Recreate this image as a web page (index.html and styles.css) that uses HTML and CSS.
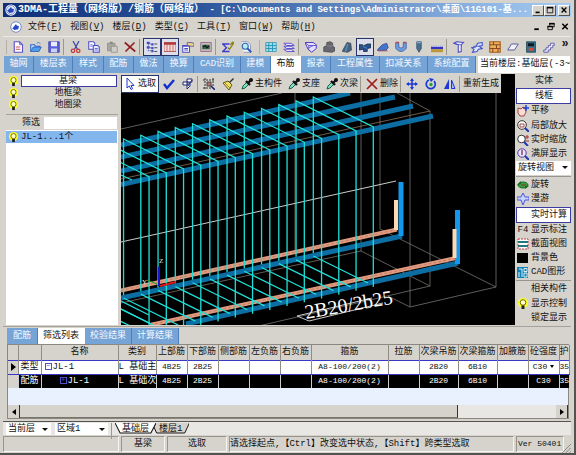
FILE: index.html
```html
<!DOCTYPE html>
<html lang="zh-CN">
<head>
<meta charset="utf-8">
<title>3DMA</title>
<link rel="stylesheet" href="styles.css">
</head>
<body>
<div class="window">
  <header class="titlebar">
    <svg class="logo" viewBox="0 0 16 16"><circle cx="8" cy="8" r="7.5" fill="#fff"/><circle cx="8" cy="8" r="6" fill="#dfe8fb" stroke="#5a78c8"/><path d="M3 9l5-5 1 2 3 1-1 4-5 1z" fill="#2947b8"/></svg>
    <h1 class="title"><span class="app">3DMA-工程量（网络版）/钢筋（网络版）</span> - [C:\Documents and Settings\Administrator\桌面\11G101-基...</h1>
    <div class="winbtns">
      <button aria-label="最小化"><svg viewBox="0 0 10 10"><path d="M2 8h5" stroke="#000" stroke-width="2"/></svg></button>
      <button aria-label="最大化"><svg viewBox="0 0 10 10"><path d="M1.500 2v6.500h7V2z" stroke="#000" fill="none"/><path d="M1 2h8" stroke="#000" stroke-width="2"/></svg></button>
      <button class="close" aria-label="关闭"><svg viewBox="0 0 10 10"><path d="M2 2l6 6M8 2L2 8" stroke="#000" stroke-width="1.700"/></svg></button>
    </div>
  </header>

  <nav class="menubar">
    <svg class="logo" viewBox="0 0 16 16"><circle cx="8" cy="8" r="7" fill="#fff" stroke="#4e6cc0"/><path d="M3 10l5-6 1 2 3 1-1 4-5 1z" fill="#2947c8"/></svg>
    <button>文件(<u>F</u>)</button><button>视图(<u>V</u>)</button><button>楼层(<u>D</u>)</button><button>类型(<u>C</u>)</button><button>工具(<u>T</u>)</button><button>窗口(<u>W</u>)</button><button>帮助(<u>H</u>)</button>
    <div class="docbtns">
      <button aria-label="最小化文档"><svg viewBox="0 0 10 10"><path d="M2 8h5" stroke="#000" stroke-width="2"/></svg></button>
      <button aria-label="还原文档"><svg viewBox="0 0 10 10"><path d="M3.500 4V1.500h5v4H7M1.500 5v3.500h5V5z" stroke="#000" fill="none"/><path d="M3 2h6M1 5h6" stroke="#000" stroke-width="1.600"/></svg></button>
      <button aria-label="关闭文档"><svg viewBox="0 0 10 10"><path d="M2 2l6 6M8 2L2 8" stroke="#000" stroke-width="1.700"/></svg></button>
    </div>
  </nav>

  <div class="toolbar">
    <i class="handle"></i>
    <button aria-label="新建"><svg viewBox="0 0 16 16"><path d="M3 1h7l4 4v10H3z" fill="#fff" stroke="#5a50c8" stroke-width="1.500"/><path d="M10 1v4h4" fill="none" stroke="#5a50c8"/><path d="M5 8h6M5 11h6" stroke="#d05050" stroke-width="1.500"/></svg></button>
    <button aria-label="打开"><svg viewBox="0 0 16 16"><path d="M1 14V5h5l1 2h6v2" fill="#cfe4ff" stroke="#2c66c8" stroke-width="1.500"/><path d="M1 14l3-6h11l-3 6z" fill="#4f9fe8" stroke="#2456b8"/><path d="M9 3q3-3 5 1" fill="none" stroke="#2c66c8"/></svg></button>
    <button aria-label="保存"><svg viewBox="0 0 16 16"><path d="M1 1h14v14H1z" fill="#5c62d8" stroke="#3434a8"/><path d="M4 1h8v6H4z" fill="#e8eeff"/><path d="M4 10h8v5H4z" fill="#cdd2f4"/></svg></button>
    <i class="sep"></i>
    <button aria-label="剪切"><svg viewBox="0 0 16 16"><path d="M4 0l6 11M12 0L6 11" stroke="#3344a8" stroke-width="1.600"/><circle cx="4" cy="13" r="2.300" fill="none" stroke="#c03838" stroke-width="1.600"/><circle cx="11" cy="13" r="2.300" fill="none" stroke="#c03838" stroke-width="1.600"/></svg></button>
    <button aria-label="复制"><svg viewBox="0 0 16 16"><path d="M1 1h6l2 2v8H1z" fill="#fff" stroke="#4848c8" stroke-width="1.400"/><path d="M7 6h6l2 2v7H7z" fill="#e5e9ff" stroke="#4848c8" stroke-width="1.400"/><path d="M9 10h4M9 12h4M3 5h3M3 7h3" stroke="#4848c8"/></svg></button>
    <button aria-label="粘贴" disabled><svg viewBox="0 0 16 16"><path d="M2 3h10v10H2z" fill="#a8a6a0" stroke="#8b8984"/><path d="M5 1h4v3H5z" fill="#8b8984"/><path d="M7 7h8v8H7z" fill="#d0cec8" stroke="#8b8984"/></svg></button>
    <button aria-label="删除"><svg viewBox="0 0 16 16"><path d="M1 2l14 12M14 2L2 14" stroke="#922020" stroke-width="2.200"/></svg></button>
    <i class="sep"></i>
    <button class="on" aria-label="树"><svg viewBox="0 0 16 16"><path d="M3 2v11M3 4h4M3 9h4M3 13h4" stroke="#333a90" stroke-dasharray="1.500 1"/><path d="M1 1h4v3H1zM1 7h4v3H1zM7 3h3v3H7zM7 8h3v3H7zM7 12h3v3H7z" fill="#4a4ac0"/><path d="M11 4h4M11 9h4M11 14h4" stroke="#222"/></svg></button>
    <button class="on" aria-label="表格"><svg viewBox="0 0 16 16"><path d="M0 2h16v12H0z" fill="#f7dada" stroke="#a83a3a"/><path d="M0 2h16v3H0z" fill="#b03838"/><path d="M4 4v10M8 4v10M12 4v10" stroke="#b85252"/></svg></button>
    <button aria-label="属性"><svg viewBox="0 0 16 16"><path d="M1 6h9v9H1z" fill="#fff" stroke="#4848c8" stroke-width="1.400"/><path d="M1 7h9M3 10h5M3 12h5" stroke="#4848c8" stroke-width="1.300"/><path d="M7 2h5l4 1v4h-4l-5-1z" fill="#ead08c" stroke="#514a8c"/></svg></button>
    <button aria-label="图像"><svg viewBox="0 0 16 16"><path d="M1 2h14v12H1z" fill="#cfb7c1" stroke="#815a79"/><path d="M3 5h10v6H3z" fill="#2d6d48"/><path d="M4 8l3-2 2 3 3-2" stroke="#111" fill="none" stroke-width="1.400"/></svg></button>
    <i class="sep"></i>
    <button aria-label="汇总"><svg viewBox="0 0 16 16"><path d="M10 4H1l5 5-5 5h9" fill="none" stroke="#3b3bd0" stroke-width="1.800"/><path d="M8 9l2 2 6-9M11 5l4-4" fill="none" stroke="#8a7c18" stroke-width="1.800"/></svg></button>
    <button aria-label="预览"><svg viewBox="0 0 16 16"><path d="M2 1h8l4 4v10H5" fill="#f4f6ff" stroke="#7a86b0"/><circle cx="7" cy="7" r="4" fill="#b8ecf4" stroke="#356aa8" stroke-width="1.500"/><path d="M10 10l5 5" stroke="#2d52b8" stroke-width="2.400"/></svg></button>
    <i class="handle mid"></i>
    <button aria-label="轴网"><svg viewBox="0 0 16 16"><path d="M1 2h14v12H1z" fill="#9fdce8" stroke="#2c96b8"/><path d="M5 2v12M10 2v12M1 6h14M1 10h14" stroke="#2c96b8" stroke-width="1.300"/></svg></button>
    <button aria-label="楼层"><svg viewBox="0 0 16 16"><path d="M1 3h10l4 3H5zM1 7h10l4 3H5zM1 11h10l4 3H5z" fill="#e4e4ff" stroke="#5a48c8" stroke-width="1.200"/></svg></button>
    <i class="sep"></i>
    <button aria-label="基础"><svg viewBox="0 0 16 16"><path d="M0 2h11l4 3v5l-6 5-5-4z" fill="#e0e0ff" stroke="#5438c0" stroke-width="1.300"/><path d="M0 2l5 4h10M5 6v5M5 9l6-3" fill="none" stroke="#5438c0"/></svg></button>
    <button aria-label="柱"><svg viewBox="0 0 16 16"><path d="M1 14V8l4-2V2l5-1 3 2v4l3 2v4l-4 2z" fill="#686770" stroke="#45444c"/><path d="M5 6l4 1 4-1" stroke="#8b8b94" fill="none"/></svg></button>
    <button aria-label="墙"><svg viewBox="0 0 16 16"><path d="M2 13L8 2l5 1 1 9-5 3-7-1z" fill="#4b6078" stroke="#35485c"/><path d="M9 4l-3 10" stroke="#45a0d8" stroke-width="1.500"/></svg></button>
    <button class="on" aria-label="梁"><svg viewBox="0 0 16 16"><path d="M0 5h5v2l6-3h5v5l-5 1v4H6v-3L0 12z" fill="#28528c" stroke="#17273f"/><path d="M5 7l6 3" stroke="#5c9ad8"/></svg></button>
    <button aria-label="板"><svg viewBox="0 0 16 16"><path d="M1 11l6-6 6-2 2 6-3 3-11 1z" fill="#3b78cc" stroke="#4b3b90"/><path d="M2 13h12" stroke="#96506c" stroke-width="1.500"/></svg></button>
    <button aria-label="槽"><svg viewBox="0 0 16 16"><path d="M1 2h4v6q3 3 6 0V2h4v8q-7 8-14 0z" fill="#6aa0e0" stroke="#38509c"/><path d="M1 2h4M11 2h4" stroke="#b84848" stroke-width="2"/></svg></button>
    <button aria-label="桩"><svg viewBox="0 0 16 16"><path d="M5 1h6v9l-3 5-3-5z" fill="#466f94" stroke="#34495e"/><path d="M5 2h6" stroke="#80a8c8" stroke-width="2"/></svg></button>
    <button aria-label="装饰"><svg viewBox="0 0 16 16"><path d="M0 8h16v3H0z" fill="#3434c0"/><path d="M0 7h16" stroke="#7676e8" stroke-dasharray="2 1"/><path d="M0 11h16v4H0z" fill="#b89838"/></svg></button>
    <i class="sep"></i>
    <button aria-label="构造柱"><svg viewBox="0 0 16 16"><path d="M1 3l4-2 9 1-3 3v9l-4 1V5z" fill="#eef0ff" stroke="#4a4ac8" stroke-width="1.400"/><path d="M1 3l6 2h4" fill="none" stroke="#4a4ac8"/></svg></button>
    <button aria-label="异形"><svg viewBox="0 0 16 16"><path d="M1 9l5-1 3-5 6-1v4l-4 1 4 3-5 1-2 3-6 1 2-4z" fill="#dbe6ff" stroke="#3d51c4" stroke-width="1.400"/><path d="M3 7h9" stroke="#3d51c4"/></svg></button>
    <button aria-label="砌体"><svg viewBox="0 0 16 16"><path d="M1 1h14v14H1z" fill="#e8b060" stroke="#a85c1c" stroke-width="1.400"/><path d="M1 5h14M1 10h14M6 1v4M10 5v5M5 10v5M12 10v5" stroke="#8c4a1c" stroke-width="1.400"/></svg></button>
    <button aria-label="面"><svg viewBox="0 0 16 16"><path d="M1 12l5-8h9l-5 8z" fill="#f2f2f8" stroke="#58589c" stroke-width="1.300"/></svg></button>
    <button aria-label="门窗"><svg viewBox="0 0 16 16"><path d="M2 1h12v14H2z" fill="#30718c" stroke="#20404c"/><path d="M4 3h8v4H4z" fill="#101820"/><path d="M5 9h6v4H5z" fill="#d84838"/></svg></button>
    <button aria-label="楼梯"><svg viewBox="0 0 16 16"><path d="M1 15v-3h3V9h3V6h3V3h5v3h-2v3h-3v3H7v3z" fill="#e9e9fb" stroke="#6a62ac" stroke-width="1.300"/></svg></button>
    <button class="more" aria-label="更多">»</button>
  </div>

  <div class="tabrow">
    <div class="tabs" role="tablist">
      <button role="tab">轴网</button><button role="tab">楼层表</button><button role="tab">样式</button><button role="tab">配筋</button><button role="tab">做法</button><button role="tab">换算</button><button role="tab">CAD识别</button><button role="tab">建模</button><button role="tab" class="sel" aria-selected="true">布筋</button><button role="tab">报表</button><button role="tab">工程属性</button><button role="tab">扣减关系</button><button role="tab">系统配置</button>
    </div>
    <div class="floor">当前楼层:基础层(-3~</div>
  </div>

  <main class="work">
    <aside class="left">
      <div class="kinds">
        <div class="kind"><svg class="bulb" viewBox="0 0 12 12"><use href="#bulb"/></svg><button class="sel">基梁</button></div>
        <div class="kind"><svg class="bulb" viewBox="0 0 12 12"><use href="#bulb"/></svg><button>地框梁</button></div>
        <div class="kind"><svg class="bulb" viewBox="0 0 12 12"><use href="#bulb"/></svg><button>地圈梁</button></div>
      </div>
      <div class="filter"><label for="flt">筛选</label><input id="flt" type="text"></div>
      <ul class="members">
        <li><svg class="bulb" viewBox="0 0 12 12"><g id="bulb"><circle cx="6" cy="5" r="5" fill="#ffff20"/><circle cx="6" cy="4.500" r="2.800" fill="#ffffc8" stroke="#6a6a00"/><path d="M4.500 7.500h3v3.500h-3z" fill="#222"/></g></svg><span>JL-1...1个</span></li>
      </ul>
    </aside>

    <section class="view">
      <div class="viewbar">
        <button class="pick"><svg viewBox="0 0 12 12"><path d="M3 0v10l2.300-2 1.700 3.500 1.600-.8L7 7.500h3z" fill="#fff" stroke="#2238c8"/></svg>选取</button>
        <button class="ico" aria-label="确定"><svg viewBox="0 0 12 12"><path d="M1 6l3 4 7-8" fill="none" stroke="#1030d0" stroke-width="2.400"/></svg></button>
        <button class="ico" aria-label="过滤"><svg viewBox="0 0 12 12"><path d="M1 4h5v3H1zM5 1h5v3H5zM5 4v7l3-3V4" fill="#fff" stroke="#222a78"/><path d="M10 2l-4 6" stroke="#222a78"/></svg></button>
        <i class="sep"></i>
        <button class="ico" aria-label="框选"><svg viewBox="0 0 12 12"><path d="M2 0v12M0 2h12M10 0v8M0 10h8" stroke="#333" stroke-dasharray="2 1"/><path d="M4 4h4v4H4z" fill="#b87878" stroke="#444"/><path d="M8 8l4 4" stroke="#222a78" stroke-width="1.600"/></svg></button>
        <button class="ico" aria-label="格式刷"><svg viewBox="0 0 12 12"><path d="M7 4l4-4 1 1-4 4z" fill="#333"/><path d="M1 5l5-2 4 4-3 5z" fill="#f0e060" stroke="#615520"/><path d="M3 5l5 5" stroke="#a09030"/></svg></button>
        <button><svg viewBox="0 0 12 12"><use href="#dropper"/></svg>主构件</button>
        <button><svg viewBox="0 0 12 12"><g id="dropper"><path d="M1 11l1-3 4-4 2 2-4 4z" fill="#80e0c8" stroke="#186048"/><path d="M5 3l4 4M7 5l3-3" stroke="#111" stroke-width="2.400"/><circle cx="10" cy="2" r="2" fill="#111"/></g></svg>支座</button>
        <button><svg viewBox="0 0 12 12"><use href="#dropper"/></svg>次梁</button>
        <i class="sep"></i>
        <button><svg viewBox="0 0 12 12"><path d="M1 1l10 10M11 1L1 11" stroke="#a01c1c" stroke-width="1.700"/></svg>删除</button>
        <i class="sep"></i>
        <button class="ico" aria-label="移动"><svg viewBox="0 0 12 12"><path d="M6 1v10M1 6h10" stroke="#1838d8" stroke-width="1.500"/><path d="M6 0l2 3H4zM6 12l2-3H4zM0 6l3-2v4zM12 6L9 4v4z" fill="#1838d8"/></svg></button>
        <button class="ico" aria-label="旋转"><svg viewBox="0 0 12 12"><path d="M4 2a4.500 4.500 0 1 0 5 1" fill="none" stroke="#1838d8" stroke-width="1.700"/><path d="M4 0l5 1-3 3z" fill="#1838d8"/><circle cx="6" cy="6.500" r="1.700" fill="#28a038"/></svg></button>
        <button class="ico" aria-label="镜像"><svg viewBox="0 0 12 12"><path d="M5 1v10H0z" fill="#1838d8"/><path d="M7.500 2v8.500H11z" fill="#a8b8f8" stroke="#1838d8"/></svg></button>
        <i class="sep"></i>
        <button class="regen">重新生成</button>
      </div>
      <svg class="scene" viewBox="121 93 394 232" preserveAspectRatio="xMinYMin slice">
        <g fill="none" stroke="#77736f" stroke-width=".8">
          <path d="M121 129L282 93M397 93l33 18M430 111v175M361 93v158M380 93v136M410 93v214M496 93v194M295 93v157"/>
          <path d="M361 251l69 35M121 303L361 251M430 286L250 328M410 307l86-20M380 229l116 58M410 307l-22-11"/>
          <path d="M121 179L430 111" stroke="#8a725e"/>
        </g>
        <path d="M121 242L396 181" stroke="#e4e4e4" stroke-width=".9"/>
        <g fill="none" stroke="#0d6ea4" stroke-width="5">
          <path d="M121 145L350 93M121 157L395 97M121 171L413 106"/>
          <path d="M121 184.500L433 116"/>
          <path d="M121 298L402 236M186 324L458 263"/>
        </g>
        <g fill="none" stroke="#e39b80" stroke-width="4">
          <path d="M121 290.500L397 229.500M150 325L456 258"/>
        </g>
        <path d="M121 290.500L397 229.500M150 325L456 258" stroke="#a86a58" stroke-width=".6" stroke-dasharray="3 2"/>
        <g fill="none" stroke="#1298ec" stroke-width="5"><path d="M401 182v54M457.500 210v54"/></g>
        <g fill="none" stroke="#fbdab4" stroke-width="4"><path d="M396 200v30M454.500 229v29"/></g>
        <g fill="none" stroke="#1fe0d8" stroke-width="1.300">
          <path id="stirrup" d="M373.300 287V127L313.300 97v156M313.300 256L368 283"/>
          <use href="#stirrup" x="-17.250" y="3.820"/><use href="#stirrup" x="-34.500" y="7.640"/>
          <use href="#stirrup" x="-51.750" y="11.460"/><use href="#stirrup" x="-69" y="15.280"/>
          <use href="#stirrup" x="-86.250" y="19.100"/><use href="#stirrup" x="-103.500" y="22.920"/>
          <use href="#stirrup" x="-120.750" y="26.740"/><use href="#stirrup" x="-138" y="30.560"/>
          <use href="#stirrup" x="-155.250" y="34.380"/><use href="#stirrup" x="-172.500" y="38.200"/>
          <use href="#stirrup" x="-189.750" y="42.020"/><use href="#stirrup" x="-207" y="45.840"/>
          <use href="#stirrup" x="-224.250" y="49.660"/>
          <path d="M132 180l-11-5M121 162l-2-1M121 309l30 15M121 301l28 14"/>
        </g>
        <path d="M159 267v19" stroke="#1018d8" stroke-width="2"/>
        <path d="M160 286l16-4" stroke="#e01818" stroke-width="2"/>
        <path d="M147 280l10 4" stroke="#18a018"/>
        <text class="axis" x="159" y="263">Z</text><text class="axis" x="142" y="284">Y</text>
        <path d="M372 298L297 316l12 5 74-18" fill="none" stroke="#ddd" stroke-width=".9"/>
        <text class="mark" x="306" y="319" transform="rotate(-10 306 319)">2B20/2b25</text>
      </svg>
    </section>

    <aside class="side">
      <button>实体</button>
      <button class="sel">线框</button>
      <button><svg viewBox="0 0 12 12"><path d="M1 3l3 1 2-2 2 1 1 4-2 4H3L1 8z" fill="#fbdcd4" stroke="#a04848"/><path d="M9 0v6M6 3h6" stroke="#2040d8" stroke-width="1.500"/></svg>平移</button>
      <button><svg viewBox="0 0 12 12"><circle cx="5" cy="5" r="4.300" fill="#fff" stroke="#333"/><path d="M3 4h4v3H3z" fill="none" stroke="#a04848"/><path d="M8 8l4 4" stroke="#2038b8" stroke-width="2"/></svg>局部放大</button>
      <button><svg viewBox="0 0 12 12"><circle cx="4.500" cy="5" r="3.800" fill="#fff" stroke="#333"/><path d="M7 8l4 4" stroke="#2038b8" stroke-width="2"/><path d="M8 3h4M10 1v4M8 7h4" stroke="#a03030"/></svg>实时缩放</button>
      <button><svg viewBox="0 0 12 12"><circle cx="5" cy="5" r="4.200" fill="#e8e8ff" stroke="#5038a0"/><path d="M5 2v5" stroke="#a03878" stroke-width="1.500"/><path d="M8 8l4 4" stroke="#2038b8" stroke-width="2"/></svg>满屏显示</button>
      <div class="pickview drop"><select aria-label="视图"><option>旋转视图</option></select></div>
      <hr>
      <button><svg viewBox="0 0 12 12"><ellipse cx="6" cy="6" rx="5" ry="3" fill="#38a040" stroke="#186820"/><path d="M0 6l4-4v3M12 7L8 10V7" fill="#186820"/><path d="M4 6h5" stroke="#a02828"/></svg>旋转</button>
      <button><svg viewBox="0 0 12 12"><path d="M6 0l2 4h4v3H8l-2 5-2-5H0V4h4z" fill="#c8d4ff" stroke="#4858d8"/></svg>漫游</button>
      <button class="sel calc">实时计算</button>
      <button><b>F4</b>显示标注</button>
      <button><svg viewBox="0 0 12 12"><path d="M1 1h10v10H1z" fill="#fff" stroke="#c83848" stroke-dasharray="2 1"/><path d="M1 4h10M1 8h10" stroke="#287878" stroke-width="2"/></svg>截面视图</button>
      <button><svg viewBox="0 0 12 12"><path d="M0 1h11v10H0z"/></svg>背景色</button>
      <button><svg viewBox="0 0 12 12"><path d="M0 1h11v11H0z" fill="#1080b0"/><path d="M2 3h3M2 6v5M5 3v8M7 2.500h3v3H7zM7 7h3v4H7z" fill="none" stroke="#d8f4ff"/></svg>CAD图形</button>
      <hr>
      <button class="calc">相关构件</button>
      <button><svg viewBox="0 0 12 12"><use href="#bulb"/></svg>显示控制</button>
      <button class="calc">锁定显示</button>
    </aside>
  </main>

  <section class="bottom">
    <div class="tabs low" role="tablist">
      <button role="tab">配筋</button><button role="tab" class="sel" aria-selected="true">筛选列表</button><button role="tab">校验结果</button><button role="tab">计算结果</button>
    </div>
    <div class="gridbox">
      <table>
        <colgroup><col class="c10"><col class="c23"><col class="c77"><col class="c38"><col class="c31"><col class="c31"><col class="c31"><col class="c31"><col class="c31"><col class="c77"><col class="c31"><col class="c39"><col class="c39"><col class="c31"><col class="c31"><col class="c10"></colgroup>
        <thead><tr><th></th><th></th><th>名称</th><th>类别</th><th>上部筋</th><th>下部筋</th><th>侧部筋</th><th>左负筋</th><th>右负筋</th><th>箍筋</th><th>拉筋</th><th>次梁吊筋</th><th>次梁箍筋</th><th>加腋筋</th><th>砼强度</th><th>护</th></tr></thead>
        <tbody>
          <tr class="type"><td class="ind"><i></i></td><td class="cjk">类型</td><td class="name"><span class="exp">−</span>JL-1</td><td class="cjk cat">L 基础主</td><td>4B25</td><td>2B25</td><td></td><td></td><td></td><td>A8-100/200(2)</td><td></td><td>2B20</td><td>6B10</td><td></td><td class="grade">C30</td><td>35</td></tr>
          <tr class="cur"><td class="ind"></td><td class="cjk">配筋</td><td class="name sub"><span class="exp">+</span>JL-1</td><td class="cjk cat">L 基础次</td><td>4B25</td><td>2B25</td><td></td><td></td><td></td><td>A8-100/200(2)</td><td></td><td>2B20</td><td>6B10</td><td></td><td>C30</td><td>35</td></tr>
        </tbody>
      </table>
      <div class="void"></div>
      <div class="hscroll">
        <button class="arrow prev" aria-label="向左"></button><div class="thumb"></div><div class="track"></div><button class="arrow next" aria-label="向右"></button>
      </div>
    </div>
  </section>

  <div class="sheets">
    <div class="drop s1"><select aria-label="范围"><option>当前层</option></select></div>
    <div class="drop s2"><select aria-label="区域"><option>区域1</option></select></div>
    <i class="sep"></i>
    <button class="sheet act"><svg viewBox="0 0 40 11" preserveAspectRatio="none"><path d="M0 0l5 10h30l5-10" fill="#fff" stroke="#111"/></svg><span>基础层</span></button><button class="sheet"><svg viewBox="0 0 40 11" preserveAspectRatio="none"><path d="M0 0l5 10h30l5-10" fill="#d6d3cd" stroke="#111"/></svg><span>楼层1</span></button>
  </div>

  <footer class="status">
    <div class="p1"></div><div class="p2">基梁</div><div class="p3">选取</div>
    <div class="p4">请选择起点,【Ctrl】改变选中状态,【Shift】跨类型选取</div>
    <div class="p5">Ver 50401</div>
    <svg class="grip" viewBox="0 0 10 10"><path d="M0 10L10 0M4 10l6-6M8 10l2-2" stroke="#85837c"/></svg>
  </footer>
</div>
</body>
</html>
```
FILE: styles.css
```css
* { box-sizing: border-box; }

body {
  margin: 0;
  background: #d6d3cd;
  color: #111;
  font: 9px/12px "Liberation Mono", "Noto Sans CJK SC", monospace;
}

button, select, input {
  font: inherit;
  color: inherit;
  border: 0;
  border-radius: 0;
  margin: 0;
  padding: 0;
  background: none;
  white-space: nowrap;
}

svg { display: block; flex: none; }

.window {
  min-height: 100vh;
  display: flex;
  flex-direction: column;
  padding: 3px 3px 0;
  border-right: 2px solid #55534f;
  border-bottom: 2px solid #55534f;
}

.titlebar {
  height: 14px;
  display: flex;
  align-items: center;
  gap: 1px;
  padding: 0 1px 0 2px;
  background: linear-gradient(90deg, #0f2f78, #2c559c 35%, #8fb6e4 85%, #a6caf0);
  color: #fff;
}
.logo { width: 12px; height: 12px; }
.title {
  flex: 1;
  min-width: 0;
  margin: 0;
  overflow: hidden;
  white-space: nowrap;
  font-size: 9px;
  line-height: 14px;
  font-weight: bold;
}
.title .app { font-size: 10px; }
.winbtns { display: flex; }
.winbtns button {
  width: 12px;
  height: 11px;
  padding: 0 1px;
  background: #d6d3cd;
  border: 1px solid;
  border-color: #fff #55534f #55534f #fff;
}
.winbtns .close { margin-left: 2px; }
.winbtns svg { width: 8px; height: 8px; }

.menubar {
  height: 19px;
  display: flex;
  align-items: center;
  padding-left: 7px;
}
.menubar .logo { margin-right: 2px; }
.menubar > button { padding: 0 4px; }
.docbtns { margin-left: auto; display: flex; gap: 4px; padding-right: 1px; }
.docbtns svg { width: 10px; height: 9px; }

.toolbar {
  height: 20px;
  display: flex;
  align-items: center;
  padding-left: 3px;
  border-top: 1px solid #eceae6;
}
.toolbar button {
  width: 18px;
  height: 18px;
  flex: none;
  display: flex;
  align-items: center;
  justify-content: center;
}
.toolbar button svg { width: 12px; height: 12px; }
.toolbar .on { border: 1px solid #27356c; background: #dde0ea; }
.toolbar .more { width: 14px; font-size: 12px; font-weight: bold; align-items: flex-start; }
.handle { width: 3px; height: 14px; flex: none; border-left: 1px solid #b4b1aa; }
.handle.mid { margin: 0 0 0 4px; }
.sep { width: 4px; height: 16px; flex: none; border-left: 1px solid #9a978f; }

.tabrow { height: 17px; display: flex; gap: 2px; padding: 0 1px; }
.tabs { display: flex; }
.tabrow .tabs { flex: 84; }
.tabs button {
  flex: 1 0 auto;
  padding: 0 5px;
  line-height: 15px;
  background: #76a4d6;
  color: #f4f9ff;
  border-right: 1px solid #4f7fb8;
}
.tabs .sel { background: #fff; color: #111; border-right-color: #fff; }
.floor { flex: 16; background: #fff; padding-left: 2px; line-height: 16px; white-space: nowrap; overflow: hidden; }

.work { flex: 1; display: flex; padding: 1px 0 1px 3px; min-height: 240px; }

.left { width: 112px; display: flex; flex-direction: column; margin-right: 3px; }
.kinds { padding-top: 1px; }
.kind { display: flex; height: 12px; align-items: center; }
.kind button { flex: 1; height: 12px; line-height: 10px; border: 1px solid transparent; margin-right: 1px; padding-right: 2px; }
.kind .sel { border-color: #3c3ca0; background: #fff; }
.bulb { width: 11px; height: 11px; margin: 0 2px; }
.filter {
  display: flex;
  height: 16px;
  margin-top: 3px;
  padding: 2px 1px 1px 16px;
  border-top: 1px solid #a5a29b;
}
.filter label { width: 22px; line-height: 12px; }
.filter input { flex: 1; min-width: 0; background: #fff; }
.members { flex: 1; margin: 0; padding: 1px 1px 0 0; list-style: none; background: #fff; }
.members li { display: flex; align-items: center; height: 12px; background: #83b6ec; }

.view { flex: 1; min-width: 0; display: flex; flex-direction: column; background: #000; overflow: hidden; }
.viewbar {
  align-self: flex-start;
  height: 19px;
  display: flex;
  align-items: center;
  background: #d6d3cd;
}
.viewbar button {
  height: 18px;
  padding: 0 2px 0 4px;
  display: flex;
  align-items: center;
  gap: 2px;
}
.viewbar svg { width: 12px; height: 12px; }
.viewbar .ico { width: 19px; padding: 0; justify-content: center; }
.viewbar .pick { padding: 0 2px; border: 1px solid #27356c; background: #fff; }
.viewbar .sep { width: 2px; }
.viewbar .regen { padding: 0 2px; }
.scene { flex: 1 1 0; min-height: 0; width: 100%; }
.axis { font: 7px "Liberation Serif", serif; fill: #eee; }
.mark { font: 20px "Liberation Serif", serif; fill: #fff; }

.side { width: 56px; display: flex; flex-direction: column; padding-left: 1px; }
.side button {
  flex: 1;
  display: flex;
  align-items: center;
  gap: 2px;
  padding: 0 0 0 1px;
  line-height: 12px;
}
.side button:first-child, .side .sel { justify-content: center; }
.side .sel { border: 1px solid #3c3ca0; background: #fff; }
.side .calc { justify-content: flex-start; padding-left: 15px; }
.side .sel.calc { padding-left: 14px; }
.side svg { width: 12px; height: 12px; }
.side b { font-weight: normal; width: 12px; }
.side hr { width: 100%; height: 1px; margin: 1px 0; border: 0; background: #98958e; }
.pickview { flex: 1; }

.drop { position: relative; display: flex; background: #fff; }
.drop select { appearance: none; width: 100%; padding-left: 2px; }
.drop::after {
  content: "";
  position: absolute;
  right: 3px;
  top: 5px;
  border: 3px solid transparent;
  border-top-color: #111;
  border-bottom: 0;
  pointer-events: none;
}

.bottom { padding: 1px 2px 0 4px; border-top: 1px solid #a5a29b; }
.low { height: 16px; }
.low button { flex: none; padding: 0 5px; }
.low button:first-child { padding: 0 6px; }

.gridbox { border: 1px solid #8b8881; background: #e9f1fe; }
table { width: 100%; table-layout: fixed; border-collapse: collapse; }
.c10 { width: 10px; } .c23 { width: 23px; } .c31 { width: 31px; }
.c38 { width: 38px; } .c39 { width: 39px; } .c77 { width: 77px; }
th, td {
  height: 14px;
  padding: 0;
  overflow: hidden;
  white-space: nowrap;
  text-align: center;
  font-weight: normal;
  line-height: 12px;
  border-right: 1px solid #8f8c86;
}
th { background: #d6d3cd; height: 15px; }
td { font-size: 8px; background: #fff; }
td.cjk { font-size: 9px; }
.type td { border-top: 1px solid #3838c8; border-bottom: 1px solid #3838c8; }
.cur td { background: #000; color: #fff; border-right-color: #ccc; }
td.ind, .cur td.ind { background: #d6d3cd; }
.ind i { display: block; width: 0; margin-left: 3px; border: 4px solid transparent; border-left: 5px solid #000; border-right: 0; }
td.name { text-align: left; padding-left: 3px; font-size: 9px; }
td.sub { padding-left: 18px; }
.exp {
  display: inline-block;
  width: 7px;
  height: 7px;
  margin-right: 1px;
  border: 1px solid #5050c8;
  color: #5050c8;
  font-size: 7px;
  line-height: 5px;
  text-align: center;
  vertical-align: middle;
}
td.cat { text-align: left; }
.grade::after {
  content: "";
  display: inline-block;
  margin: 0 0 1px 3px;
  border: 2px solid transparent;
  border-top: 3px solid #000;
  border-bottom: 0;
}
.void { height: 17px; }
.hscroll { display: flex; height: 13px; background: #e9e7e3; }
.arrow { width: 12px; display: flex; align-items: center; justify-content: center; background: #d6d3cd; border-right: 1px solid #333; }
.arrow::after { content: ""; border: 3px solid transparent; }
.prev::after { border-right: 4px solid #000; border-left: 0; }
.next::after { border-left: 4px solid #000; border-right: 0; }
.thumb { flex: 439; background: #d6d3cd; border-right: 1px solid #333; border-bottom: 1px solid #77746e; }
.track { flex: 98; }

.sheets { display: flex; height: 14px; margin-top: 2px; padding: 1px 0 0 3px; border-top: 1px solid #55534f; background: #e9e7e3; }
.s1 { width: 45px; }
.s2 { width: 53px; margin: 0 3px 0 4px; }
.sheet { position: relative; height: 11px; padding: 0 7px; margin-right: -4px; line-height: 10px; }
.sheet svg { position: absolute; inset: 0; width: 100%; height: 100%; }
.sheet span { position: relative; }
.act { z-index: 1; }

.status { display: flex; gap: 2px; height: 18px; padding: 1px 0 0; }
.status div {
  height: 16px;
  line-height: 14px;
  text-align: center;
  white-space: nowrap;
  overflow: hidden;
  border: 1px solid;
  border-color: #98958e #f6f5f2 #f6f5f2 #98958e;
}
.status .p1 { width: 116px; }
.status .p2 { width: 44px; }
.status .p3 { width: 60px; }
.status .p4 { flex: 1; text-align: left; }
.status .p5 { width: 48px; text-align: left; font-size: 8px; padding-left: 1px; }
.grip { width: 9px; height: 9px; align-self: flex-end; margin-left: -4px; }
```
